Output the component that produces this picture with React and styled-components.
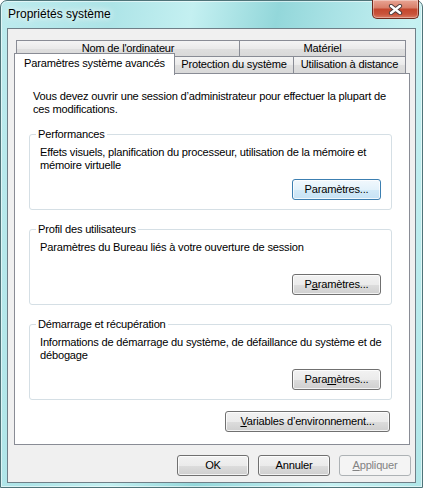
import React from 'react'
import styled, { createGlobalStyle } from 'styled-components'

const GlobalStyle = createGlobalStyle`
  html, body {
    margin: 0;
    padding: 0;
    background: #ffffff;
  }
  body {
    font-family: "Segoe UI", "Liberation Sans", Arial, sans-serif;
    font-size: 11.1px;
    letter-spacing: -0.2px;
    color: #000;
  }
`

function App() {
  return (
    <>
      <GlobalStyle />
      <Window>
        <TitleBar>
          <Title>Propriétés système</Title>
          <CloseButton aria-label="Fermer">
            <svg width="15" height="11" viewBox="0 0 15 11">
              <path d="M3 2 L12 9 M12 2 L3 9" stroke="#4a3a3a" strokeWidth="4.2" strokeLinecap="round" />
              <path d="M3 2 L12 9 M12 2 L3 9" stroke="#ffffff" strokeWidth="2.4" strokeLinecap="round" />
            </svg>
          </CloseButton>
        </TitleBar>

        <Client>
          <TabRow>
            <Tab $w={224} $first>Nom de l'ordinateur</Tab>
            <Tab $w={166}>Matériel</Tab>
          </TabRow>
          <FrontRow>
            <Tab $w={161} $first $selected>Paramètres système avancés</Tab>
            <Tab $w={119}>Protection du système</Tab>
            <Tab $w={112}>Utilisation à distance</Tab>
          </FrontRow>

          <Panel>
            <Intro>
              <Line>Vous devez ouvrir une session d’administrateur pour effectuer la plupart de</Line>
              <Line>ces modifications.</Line>
            </Intro>

            <Group>
              <Legend>Performances</Legend>
              <GroupBody>
                <Desc>
                  <Line>Effets visuels, planification du processeur, utilisation de la mémoire et</Line>
                  <Line>mémoire virtuelle</Line>
                </Desc>
                <Button $w={89} $default>Paramètres...</Button>
              </GroupBody>
            </Group>

            <Group>
              <Legend>Profil des utilisateurs</Legend>
              <GroupBody>
                <Desc>
                  <Line>Paramètres du Bureau liés à votre ouverture de session</Line>
                </Desc>
                <Button $w={89}>P<Accel>a</Accel>ramètres...</Button>
              </GroupBody>
            </Group>

            <Group>
              <Legend>Démarrage et récupération</Legend>
              <GroupBody>
                <Desc>
                  <Line>Informations de démarrage du système, de défaillance du système et de</Line>
                  <Line>débogage</Line>
                </Desc>
                <Button $w={89}>Para<Accel>m</Accel>ètres...</Button>
              </GroupBody>
            </Group>

            <EnvRow>
              <Button $w={165}><Accel>V</Accel>ariables d’environnement...</Button>
            </EnvRow>
          </Panel>

          <Footer>
            <Button $w={72}>OK</Button>
            <Button $w={72}>Annuler</Button>
            <Button $w={72} disabled><Accel>A</Accel>ppliquer</Button>
          </Footer>
        </Client>
      </Window>
    </>
  )
}

export default App

const Window = styled.div`
    width: 423px;
    height: 488px;
    box-sizing: border-box;
    border: 1px solid #4f7479;
    border-radius: 7px 7px 0 0;
    padding: 0 6px 4px 6px;
    display: flex;
    flex-direction: column;
    background: linear-gradient(100deg, #bdebee 0%, #ade4e7 22%, #c4f0f1 38%, #93d7da 55%, #a9e2e5 66%, #c6f1f2 82%, #b0e6e8 100%);
    box-shadow: inset 0 0 0 1px rgba(255, 255, 255, 0.55);
`

const TitleBar = styled.div`
    height: 27px;
    display: flex;
    align-items: center;
    justify-content: space-between;
`

const Title = styled.div`
    font-size: 12px;
    letter-spacing: 0;
    padding-left: 1px;
    padding-bottom: 1px;
    text-shadow: 0 0 6px rgba(255, 255, 255, 0.95), 0 0 10px rgba(255, 255, 255, 0.8);
`

const CloseButton = styled.div`
    align-self: flex-start;
    margin-top: -1px;
    margin-right: -3px;
    width: 47px;
    height: 19px;
    box-sizing: border-box;
    border: 1px solid #6e2a1d;
    border-top: none;
    border-radius: 0 0 5px 5px;
    display: flex;
    align-items: center;
    justify-content: center;
    background: linear-gradient(to bottom, #e9a594 0%, #d9806b 42%, #c4472e 52%, #c9533a 78%, #d97a62 100%);
    box-shadow: inset 0 0 0 1px rgba(255, 255, 255, 0.35);
`

const Client = styled.div`
    flex: 1;
    border: 1px solid #6f7f88;
    background: #f0f0f0;
    display: flex;
    flex-direction: column;
    padding: 11px 5px 0 6px;
`

const TabRow = styled.div`
    display: flex;
    height: 16px;
    margin: 0 2px;
`

const FrontRow = styled.div`
    display: flex;
    height: 17px;
`

const Tab = styled.div`
    width: ${p => p.$w}px;
    box-sizing: border-box;
    border: 1px solid #898c95;
    border-bottom: none;
    border-left-width: ${p => (p.$first ? 1 : 0)}px;
    background: ${p => p.$selected
        ? '#ffffff'
        : 'linear-gradient(to bottom, #f4f4f4 0%, #eaeaea 50%, #dfdfdf 51%, #d9d9d9 100%)'};
    display: flex;
    align-items: center;
    justify-content: center;
    white-space: nowrap;
    line-height: 13px;
    padding-bottom: ${p => (p.$selected ? 3 : 1)}px;
    position: ${p => (p.$selected ? 'relative' : 'static')};
    z-index: ${p => (p.$selected ? 2 : 'auto')};
    margin-top: ${p => (p.$selected ? -3 : 0)}px;
    margin-bottom: ${p => (p.$selected ? -2 : 0)}px;
`

const Panel = styled.div`
    border: 1px solid #898c95;
    background: #ffffff;
    padding: 16px 17px 12px 14px;
    display: flex;
    flex-direction: column;
`

const Intro = styled.div`
    margin-left: 4px;
    margin-bottom: 12px;
`

const Line = styled.div`
    line-height: 13px;
    white-space: nowrap;
`

const Group = styled.fieldset`
    margin: 0 0 13px 0;
    padding: 0;
    min-width: 0;
    border: 1px solid #d5dfe5;
    border-radius: 3px;
`

const Legend = styled.legend`
    margin-left: 6px;
    padding: 0 2px;
    line-height: 13px;
    font-size: inherit;
`

const GroupBody = styled.div`
    display: flex;
    flex-direction: column;
    align-items: flex-end;
    padding: 5px 10px 9px 10px;
`

const Desc = styled.div`
    align-self: stretch;
    min-height: 26px;
    margin-bottom: 7px;
`

const EnvRow = styled.div`
    display: flex;
    justify-content: flex-end;
    margin-top: -2px;
    padding-right: 2px;
`

const Footer = styled.div`
    display: flex;
    justify-content: flex-end;
    gap: 9px;
    margin-top: 10px;
    margin-right: -1px;
`

const Button = styled.button`
    width: ${p => p.$w}px;
    height: 21px;
    box-sizing: border-box;
    padding: 0 0 1px 0;
    font-family: inherit;
    font-size: inherit;
    letter-spacing: inherit;
    color: #000;
    border-radius: 3px;
    border: 1px solid ${p => (p.$default ? '#3c7fb1' : '#707070')};
    background: ${p => p.$default
        ? 'linear-gradient(to bottom, #f1f8fd 0%, #e3f2fb 50%, #d3eaf8 51%, #c6e2f4 100%)'
        : 'linear-gradient(to bottom, #f2f2f2 0%, #ebebeb 50%, #dddddd 51%, #cfcfcf 100%)'};
    box-shadow: inset 0 0 0 1px rgba(255, 255, 255, 0.75);
    white-space: nowrap;

    &:disabled {
        color: #838383;
        border-color: #adb2b5;
        background: #f4f4f4;
        box-shadow: none;
    }
`

const Accel = styled.span`
    text-decoration: underline;
`
